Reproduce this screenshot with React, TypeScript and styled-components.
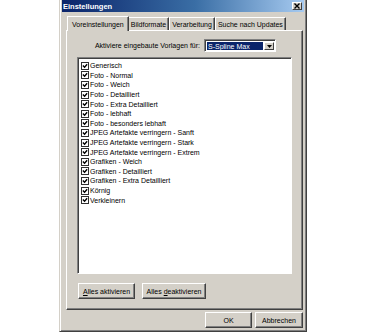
import React from 'react'
import styled, { createGlobalStyle } from 'styled-components'

const GlobalStyle = createGlobalStyle`
  html, body {
    margin: 0;
    padding: 0;
    background: #ffffff;
  }
  body {
    font-family: "Liberation Sans", Arial, sans-serif;
    font-size: 7px;
    color: #000;
  }
`;

const presets = [
  'Generisch',
  'Foto - Normal',
  'Foto - Weich',
  'Foto - Detailliert',
  'Foto - Extra Detailliert',
  'Foto - lebhaft',
  'Foto - besonders lebhaft',
  'JPEG Artefakte verringern - Sanft',
  'JPEG Artefakte verringern - Stark',
  'JPEG Artefakte verringern - Extrem',
  'Grafiken - Weich',
  'Grafiken - Detailliert',
  'Grafiken - Extra Detailliert',
  'Körnig',
  'Verkleinern',
];

const tabs = ['Voreinstellungen', 'Bildformate', 'Verarbeitung', 'Suche nach Updates'];

const App = () => {
  return (
    <Page>
      <GlobalStyle />
      <Window>
        <TitleBar>
          <TitleText>Einstellungen</TitleText>
          <CloseButton>
            <svg width="6" height="6" viewBox="0 0 6 6">
              <path d="M0.5 0.5 L5.5 5.5 M5.5 0.5 L0.5 5.5" stroke="#000" strokeWidth="1.4" />
            </svg>
          </CloseButton>
        </TitleBar>

        <Content>
          <TabRow>
            {tabs.map((t, idx) => (
              <Tab key={t} active={idx === 0}>{t}</Tab>
            ))}
          </TabRow>

          <Panel>
            <PresetRow>
              <span>Aktiviere eingebaute Vorlagen für:</span>
              <Select>
                <SelectValue>S-Spline Max</SelectValue>
                <SelectArrow>
                  <svg width="5" height="3" viewBox="0 0 5 3">
                    <path d="M0 0 H5 L2.5 3 Z" fill="#000" />
                  </svg>
                </SelectArrow>
              </Select>
            </PresetRow>

            <ListBox>
              {presets.map((p) => (
                <ListItem key={p}>
                  <CheckBox>
                    <svg width="6" height="6" viewBox="0 0 7 7">
                      <path d="M1 3 L3 5 L6 1.5" stroke="#000" strokeWidth="1.6" fill="none" />
                    </svg>
                  </CheckBox>
                  <span>{p}</span>
                </ListItem>
              ))}
            </ListBox>

            <ButtonRow>
              <Button width={57}><span><u>A</u>lles aktivieren</span></Button>
              <Button width={64}><span>Alles <u>d</u>eaktivieren</span></Button>
            </ButtonRow>
          </Panel>

          <Footer>
            <Button width={47}>OK</Button>
            <Button width={48}>Abbrechen</Button>
          </Footer>
        </Content>
      </Window>
    </Page>
  )
}

export default App

const Page = styled.div`
    display: flex;
    padding-left: 59px;
    height: 333px;
    box-sizing: border-box;
`;

const Window = styled.div`
    width: 248px;
    height: 332px;
    background: #d4d0c8;
    box-sizing: border-box;
    border-left: 1px solid #d4d0c8;
    border-right: 1px solid #404040;
    border-bottom: 1px solid #404040;
    box-shadow: inset 1px 0 0 #fff, inset -1px -1px 0 #808080;
    padding: 0 2px 2px 2px;
    display: flex;
    flex-direction: column;
`;

const TitleBar = styled.div`
    height: 12px;
    background: linear-gradient(90deg, #0a246a 0%, #3a6ea5 55%, #a6caf0 100%);
    display: flex;
    align-items: center;
    justify-content: space-between;
    padding: 0 2px 0 1px;
`;

const TitleText = styled.span`
    color: #fff;
    font-weight: 700;
    font-size: 7.5px;
`;

const CloseButton = styled.div`
    width: 10px;
    height: 8px;
    background: #d4d0c8;
    box-sizing: border-box;
    border-top: 1px solid #fff;
    border-left: 1px solid #fff;
    border-right: 1px solid #404040;
    border-bottom: 1px solid #404040;
    display: flex;
    align-items: center;
    justify-content: center;
`;

const Content = styled.div`
    flex: 1;
    display: flex;
    flex-direction: column;
    padding: 3px 0 0 4px;
`;

const TabRow = styled.div`
    display: flex;
    align-items: flex-end;
    height: 15px;
    padding-left: 2px;
`;

const Tab = styled.div<{ active: boolean }>`
    height: ${p => (p.active ? 15 : 13)}px;
    padding: 0 ${p => (p.active ? 4 : 2)}px;
    margin: 0 ${p => (p.active ? -1 : 0)}px;
    display: flex;
    align-items: center;
    box-sizing: border-box;
    border-top: 1px solid #fff;
    border-left: 1px solid #fff;
    border-right: 1px solid #404040;
    box-shadow: inset -1px 0 0 #808080;
    background: #d4d0c8;
    position: relative;
    z-index: ${p => (p.active ? 2 : 1)};
    margin-bottom: ${p => (p.active ? -1 : 0)}px;
    white-space: nowrap;
`;

const Panel = styled.div`
    width: 237px;
    height: 280px;
    box-sizing: border-box;
    border-top: 1px solid #fff;
    border-left: 1px solid #fff;
    border-right: 1px solid #404040;
    border-bottom: 1px solid #404040;
    box-shadow: inset -1px -1px 0 #808080;
    padding: 8px 10px 0 10px;
    display: flex;
    flex-direction: column;
`;

const PresetRow = styled.div`
    display: flex;
    align-items: center;
    justify-content: flex-end;
    gap: 4px;
    height: 13px;
    padding-right: 16px;
`;

const Select = styled.div`
    width: 72px;
    height: 13px;
    box-sizing: border-box;
    background: #fff;
    border-top: 1px solid #808080;
    border-left: 1px solid #808080;
    border-right: 1px solid #fff;
    border-bottom: 1px solid #fff;
    box-shadow: inset 1px 1px 0 #404040;
    display: flex;
    padding: 2px 1px 1px 2px;
    gap: 1px;
`;

const SelectValue = styled.div`
    flex: 1;
    background: #0a246a;
    color: #fff;
    display: flex;
    align-items: center;
    padding-left: 1px;
`;

const SelectArrow = styled.div`
    width: 10px;
    background: #d4d0c8;
    box-sizing: border-box;
    border-top: 1px solid #fff;
    border-left: 1px solid #fff;
    border-right: 1px solid #404040;
    border-bottom: 1px solid #404040;
    display: flex;
    align-items: center;
    justify-content: center;
`;

const ListBox = styled.div`
    margin-top: 5px;
    width: 215px;
    height: 217px;
    box-sizing: border-box;
    background: #fff;
    border-top: 1px solid #808080;
    border-left: 1px solid #808080;
    border-right: 1px solid #fff;
    border-bottom: 1px solid #fff;
    box-shadow: inset 1px 1px 0 #404040;
    padding: 3px 0 0 3px;
    display: flex;
    flex-direction: column;
`;

const ListItem = styled.div`
    height: 9.6px;
    display: flex;
    align-items: center;
    gap: 1px;
    white-space: nowrap;
`;

const CheckBox = styled.div`
    width: 8px;
    height: 8px;
    box-sizing: border-box;
    background: #fff;
    border: 1px solid #303030;
    display: flex;
    align-items: center;
    justify-content: center;
`;

const ButtonRow = styled.div`
    display: flex;
    gap: 7px;
    margin-top: 9px;
    padding-left: 1px;
`;

const Button = styled.div<{ width: number }>`
    width: ${p => p.width}px;
    height: 16px;
    box-sizing: border-box;
    background: #d4d0c8;
    border-top: 1px solid #fff;
    border-left: 1px solid #fff;
    border-right: 1px solid #404040;
    border-bottom: 1px solid #404040;
    box-shadow: inset -1px -1px 0 #808080;
    display: flex;
    align-items: center;
    justify-content: center;
    white-space: nowrap;
    u {
        text-decoration: underline;
    }
`;

const Footer = styled.div`
    display: flex;
    justify-content: flex-end;
    gap: 3px;
    margin-top: 2px;
    width: 237px;
`;
